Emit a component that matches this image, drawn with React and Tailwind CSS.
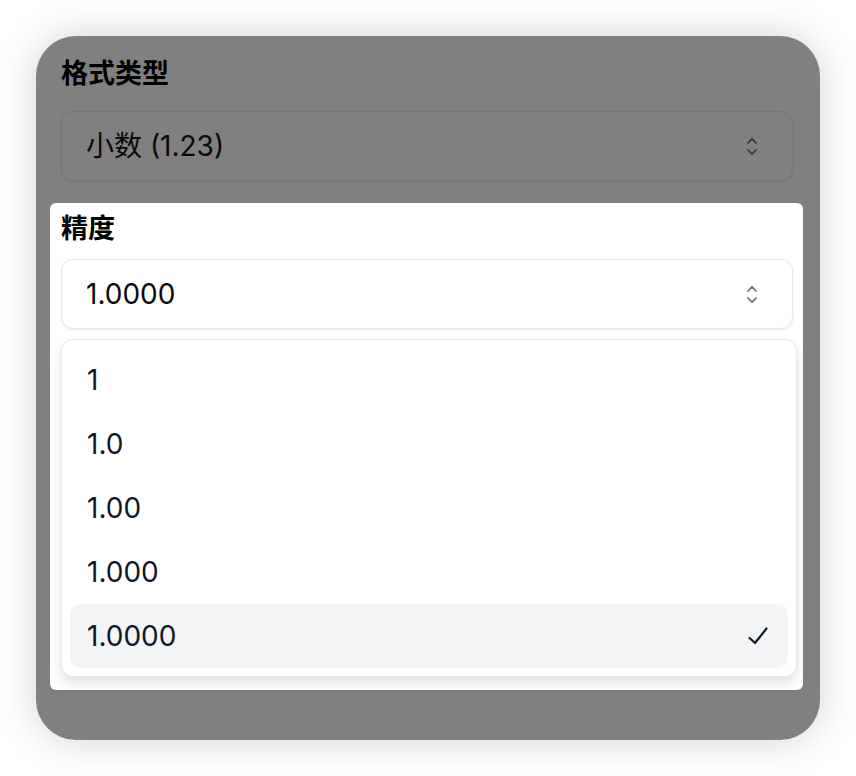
import React from 'react';

const options = ['1', '1.0', '1.00', '1.000', '1.0000'];

function Chevrons({ color = '#6b7280' }) {
    return (
        <svg width="10" height="19" viewBox="0 0 10 19" fill="none" stroke={color} strokeWidth="1.8" strokeLinecap="round" strokeLinejoin="round">
            <path d="M1 6L5 1.8L9 6" />
            <path d="M1 13L5 17.2L9 13" />
        </svg>
    );
}

function Check() {
    return (
        <svg width="20" height="18" viewBox="0 0 20 18" fill="none" stroke="#111827" strokeWidth="2.2" strokeLinecap="round" strokeLinejoin="round">
            <path d="M1.5 11L7 16L18.5 1.5" />
        </svg>
    );
}

export default function App() {
    const selected = '1.0000';

    return (
        <div className="min-h-screen bg-white pt-[36px] pl-[36px]" style={{ fontFamily: 'Inter, "Noto Sans CJK SC", sans-serif' }}>
            <div className="w-[784px] h-[704px] rounded-[40px] bg-[#808080] shadow-[0_0_40px_rgba(0,0,0,0.18)] pl-[25px] pr-[27px] pt-[20px]">
                {/* dimmed field */}
                <div className="text-[27px] leading-[36px] font-bold text-black">格式类型</div>
                <div className="mt-[19px] h-[70px] rounded-[12px] border border-[#777777] bg-[#808080] shadow-[0_1px_2px_rgba(0,0,0,0.08)] flex items-center justify-between pl-[24px] pr-[35px]">
                    <span className="text-[28px] text-[#0a0a0a]">小数 (1.23)</span>
                    <Chevrons color="#3a3b3f" />
                </div>

                {/* highlighted field */}
                <div className="mt-[22px] -ml-[11px] -mr-[10px] bg-white rounded-[6px] pl-[11px] pr-[10px] pt-[8px] pb-[13px]">
                    <div className="text-[27px] leading-[36px] font-bold text-black">精度</div>
                    <div className="mt-[12px] h-[70px] rounded-[12px] border border-[#e5e7eb] bg-white shadow-[0_1px_3px_rgba(0,0,0,0.08)] flex items-center justify-between pl-[24px] pr-[35px]">
                        <span className="text-[28px] text-[#0a0a0a]">{selected}</span>
                        <Chevrons />
                    </div>
                    <div className="mt-[10px] -mr-[4px] rounded-[12px] border border-[#e5e7eb] bg-white shadow-[0_6px_12px_rgba(0,0,0,0.12)] p-[8px]">
                        {options.map((opt) => (
                            <div
                                key={opt}
                                className={
                                    opt === selected
                                        ? 'h-[64px] rounded-[10px] bg-[#f3f4f6] flex items-center justify-between pl-[17px] pr-[20px]'
                                        : 'h-[64px] rounded-[10px] flex items-center justify-between pl-[17px] pr-[20px]'
                                }
                            >
                                <span className="text-[28px] text-[#111827]">{opt}</span>
                                {opt === selected && <Check />}
                            </div>
                        ))}
                    </div>
                </div>
            </div>
        </div>
    );
}
